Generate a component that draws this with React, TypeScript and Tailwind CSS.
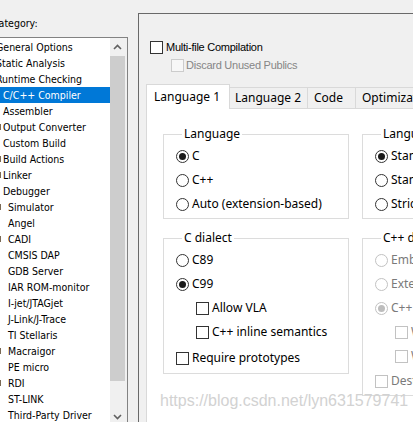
import React from "react"

type Item = { label: string; x: number; selected?: boolean; mark?: boolean }

const items: Item[] = [
  { label: "General Options", x: -4 },
  { label: "Static Analysis", x: -4 },
  { label: "Runtime Checking", x: -4 },
  { label: "C/C++ Compiler", x: 3, selected: true },
  { label: "Assembler", x: 3 },
  { label: "Output Converter", x: 3, mark: true },
  { label: "Custom Build", x: 3 },
  { label: "Build Actions", x: 3, mark: true },
  { label: "Linker", x: 3, mark: true },
  { label: "Debugger", x: 3 },
  { label: "Simulator", x: 8, mark: true },
  { label: "Angel", x: 8 },
  { label: "CADI", x: 8, mark: true },
  { label: "CMSIS DAP", x: 8 },
  { label: "GDB Server", x: 8 },
  { label: "IAR ROM-monitor", x: 8 },
  { label: "I-jet/JTAGjet", x: 8 },
  { label: "J-Link/J-Trace", x: 8 },
  { label: "TI Stellaris", x: 8 },
  { label: "Macraigor", x: 8, mark: true },
  { label: "PE micro", x: 8 },
  { label: "RDI", x: 8, mark: true },
  { label: "ST-LINK", x: 8 },
  { label: "Third-Party Driver", x: 8 },
]

const listFont = "font-['DejaVu_Sans_Condensed','DejaVu_Sans',sans-serif] text-[10.5px]"
const uiFont = "font-['Noto_Sans','Open_Sans',sans-serif] text-[12px]"
const smallFont = "font-['Liberation_Sans',Arial,sans-serif] text-[11px] tracking-[-0.25px]"

function Chevron({ up }: { up?: boolean }) {
  return (
    <svg width="9" height="6" viewBox="0 0 9 6" className="block">
      <polyline
        points={up ? "1,5 4.5,1.5 8,5" : "1,1 4.5,4.5 8,1"}
        fill="none"
        stroke="#606060"
        strokeWidth="1.6"
      />
    </svg>
  )
}

function Radio({ label, checked, disabled }: { label: string; checked?: boolean; disabled?: boolean }) {
  return (
    <div className="flex h-[24px] items-center">
      <span
        className={`flex h-[13px] w-[13px] shrink-0 items-center justify-center rounded-full border bg-white ${
          disabled ? "border-[#c2c2c2]" : "border-[#333333]"
        }`}
      >
        {checked && (
          <span className={`h-[7px] w-[7px] rounded-full ${disabled ? "bg-[#bdbdbd]" : "bg-[#1a1a1a]"}`} />
        )}
      </span>
      <span className={`ml-[3px] whitespace-nowrap leading-[16px] ${uiFont} ${disabled ? "text-[#7a7a7a]" : "text-black"}`}>
        {label}
      </span>
    </div>
  )
}

function Check({ label, disabled, indent }: { label: string; disabled?: boolean; indent?: boolean }) {
  return (
    <div className={`flex h-[24px] items-center ${indent ? "ml-[20px]" : ""}`}>
      <span
        className={`h-[13px] w-[13px] shrink-0 border bg-white ${disabled ? "border-[#c2c2c2]" : "border-[#333333]"}`}
      />
      <span className={`ml-[3px] whitespace-nowrap leading-[16px] ${uiFont} ${disabled ? "text-[#7a7a7a]" : "text-black"}`}>
        {label}
      </span>
    </div>
  )
}

function Group({ title, children, className }: { title: string; children: React.ReactNode; className?: string }) {
  return (
    <fieldset className={`w-[186px] shrink-0 border border-[#dcdcdc] pl-[12px] ${className ?? ""}`}>
      <legend className={`ml-[6px] px-[2px] leading-[16px] text-black whitespace-nowrap ${uiFont}`}>{title}</legend>
      {children}
    </fieldset>
  )
}

export default function App() {
  return (
    <div className="relative flex h-[422px] w-[413px] overflow-hidden bg-[#f0f0f0]">
      {/* category tree */}
      <div className="flex w-[138px] shrink-0 flex-col">
        <div className={`-ml-[8px] h-[37px] shrink-0 pt-[16px] leading-[14px] text-black ${listFont}`}>Category:</div>
        <div className="flex h-[389px] w-[128px] shrink-0 border-t border-r border-[#828282] bg-white">
          <ul className="w-[110px] pt-[1px]">
            {items.map((it) => (
              <li
                key={it.label}
                className={`relative h-[16px] whitespace-nowrap leading-[16px] ${listFont} ${
                  it.selected ? "bg-[#0078d7] text-white" : "text-black"
                }`}
              >
                {it.mark && <span className="absolute left-0 top-[5px] h-[6px] w-[1px] bg-[#7a6a55]" />}
                <span className="relative" style={{ left: it.x }}>
                  {it.label}
                </span>
              </li>
            ))}
          </ul>
          <div className="flex w-[17px] flex-col bg-[#f0f0f0]">
            <div className="flex h-[18px] shrink-0 items-center justify-center pr-[2px]">
              <Chevron up />
            </div>
            <div className="mr-[2px] h-[325px] shrink-0 bg-[#cdcdcd]" />
            <div className="h-[27px] shrink-0" />
            <div className="flex h-[17px] shrink-0 items-center justify-center pr-[2px]">
              <Chevron />
            </div>
          </div>
        </div>
      </div>

      {/* options panel */}
      <div className="mt-[13px] flex min-w-0 flex-1 flex-col border-l border-t border-[#696969] pl-[7px] pt-[27px]">
        <div className="ml-[4px] flex h-[13px] shrink-0 items-center">
          <span className="h-[13px] w-[13px] border border-[#333333] bg-white" />
          <span className={`ml-[3px] whitespace-nowrap text-black ${smallFont}`}>Multi-file Compilation</span>
        </div>
        <div className="ml-[25px] mt-[5px] flex h-[13px] shrink-0 items-center">
          <span className="h-[13px] w-[13px] border border-[#cccccc] bg-[#f7f7f7]" />
          <span className={`ml-[2px] whitespace-nowrap text-[#868686] ${smallFont}`}>Discard Unused Publics</span>
        </div>

        <div className="relative z-10 -mb-px mt-[12px] flex shrink-0 items-end">
          <div className={`h-[25px] w-[84px] shrink-0 border-l border-r border-t border-[#d9d9d9] bg-white pl-[7px] pt-[4px] leading-[16px] text-black ${uiFont}`}>
            Language 1
          </div>
          <div className={`mb-px h-[21px] w-[78px] shrink-0 border-r border-t border-[#d9d9d9] bg-[#f0f0f0] pl-[5px] pt-[2px] leading-[16px] text-black whitespace-nowrap ${uiFont}`}>
            Language 2
          </div>
          <div className={`mb-px h-[21px] w-[48px] shrink-0 border-r border-t border-[#d9d9d9] bg-[#f0f0f0] pl-[6px] pt-[2px] leading-[16px] text-black ${uiFont}`}>
            Code
          </div>
          <div className={`mb-px h-[21px] w-[100px] shrink-0 border-r border-t border-[#d9d9d9] bg-[#f0f0f0] pl-[6px] pt-[2px] leading-[16px] text-black whitespace-nowrap ${uiFont}`}>
            Optimizations
          </div>
        </div>

        <div className="flex flex-1 border-l border-t border-[#d9d9d9] bg-white pl-[16px] pt-[17px]">
          <div className="flex shrink-0 flex-col">
            <Group title="Language" className="pb-[2px]">
              <div className="mt-[2px]">
                <Radio label="C" checked />
                <Radio label="C++" />
                <Radio label="Auto (extension-based)" />
              </div>
            </Group>
            <Group title="C dialect" className="mt-[11px] pb-[3px]">
              <div className="mt-[2px]">
                <Radio label="C89" />
                <Radio label="C99" checked />
                <Check label="Allow VLA" indent />
                <Check label="C++ inline semantics" indent />
                <div className="mt-[2px]">
                  <Check label="Require prototypes" />
                </div>
              </div>
            </Group>
          </div>
          <div className="ml-[13px] flex shrink-0 flex-col">
            <Group title="Language conformance" className="pb-[2px]">
              <div className="mt-[2px]">
                <Radio label="Standard with IAR extensions" checked />
                <Radio label="Standard" />
                <Radio label="Strict" />
              </div>
            </Group>
            <Group title="C++ dialect" className="mt-[11px] pb-[2px]">
              <div className="mt-[2px]">
                <Radio label="Embedded C++" disabled />
                <Radio label="Extended Embedded C++" disabled />
                <Radio label="C++" checked disabled />
                <Check label="With exceptions" indent disabled />
                <Check label="With RTTI" indent disabled />
                <div className="mt-[1px]">
                  <Check label="Destroy static objects" disabled />
                </div>
              </div>
            </Group>
          </div>
        </div>
      </div>

      {/* watermark */}
      <div className="pointer-events-none absolute left-[160px] top-[391px] whitespace-nowrap font-['Liberation_Sans',Arial,sans-serif] text-[16px] leading-[20px] text-[#d2d2d2]">
        https://blog.csdn.net/lyn631579741
      </div>
    </div>
  )
}
